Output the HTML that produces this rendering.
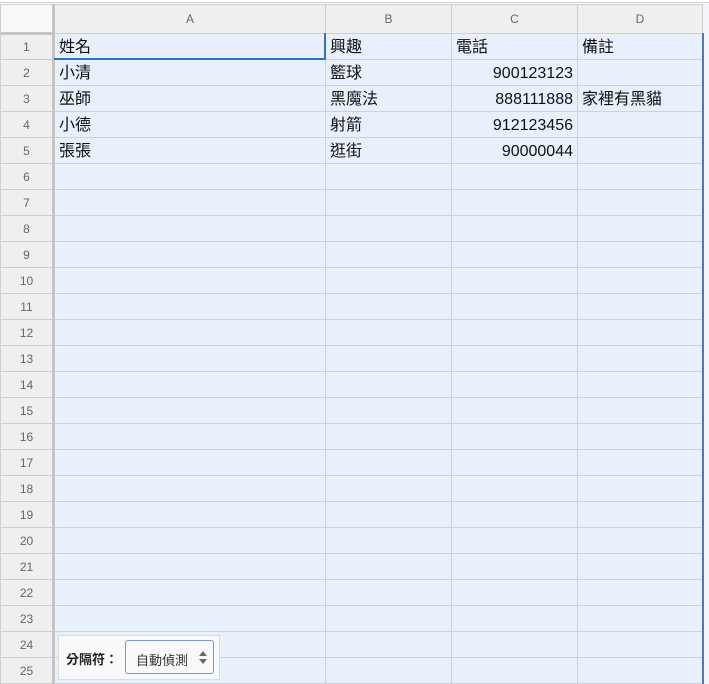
<!DOCTYPE html>
<html><head><meta charset="utf-8"><style>
body{margin:0;width:709px;height:684px;overflow:hidden;background:#fff;font-family:"Liberation Sans","Noto Sans CJK TC",sans-serif;position:relative}
.topline{position:absolute;left:0;top:2px;width:709px;height:1px;background:#d0d0d0}
table{position:absolute;left:0;top:4px;border-collapse:collapse;table-layout:fixed}
td{border:1px solid #c9d2df;height:25px;padding:0 4px;font-size:16px;color:#111;background:#e8f0fc;white-space:nowrap;overflow:hidden;line-height:18px;box-sizing:border-box}
tr td{height:26px}
tr:not(.h) td:not(.rh){padding-top:3px}
tr.h td{background:#efefef;border-color:#cfcfcf;color:#666;font-size:12px;text-align:center;height:29px}
td.rh{background:#efefef;border-color:#cfcfcf;color:#666;font-size:12px;text-align:center;border-right:3px solid #c4c4c4}
tr.h td.c0{background:#f8f9fa;border-right:3px solid #c4c4c4;border-bottom:3px solid #c4c4c4}
td.n{text-align:right}
.ext{position:absolute;left:703px;top:4px;width:6px;height:680px;background:#f2f4f7}
.blue{position:absolute;left:702px;top:33px;width:2px;height:651px;background:#4a78c2}
.act{position:absolute;left:54px;top:58px;width:272px;height:2px;background:#2f73c9}
.act2{position:absolute;left:324px;top:33px;width:2px;height:27px;background:#2f73c9}
.pop{position:absolute;left:58px;top:635px;width:162px;height:45px;background:#f8f9fa;border:1px solid #dcdcdc;box-sizing:border-box}
.lab{position:absolute;left:7px;top:13px;font-size:13px;font-weight:bold;color:#222}
.sel{position:absolute;left:66px;top:4px;width:89px;height:34px;border:1px solid #7a9cc9;border-radius:3px;background:#f8f9fa;box-sizing:border-box;font-size:13px;color:#333}
.sel span{position:absolute;left:10px;top:9px}
.ar{position:absolute;left:73px;top:10px;width:0;height:0;border-left:4px solid transparent;border-right:4px solid transparent;border-bottom:5px solid #666}
.ar2{position:absolute;left:73px;top:18px;width:0;height:0;border-left:4px solid transparent;border-right:4px solid transparent;border-top:5px solid #666}
</style></head><body>
<div class="topline"></div>
<div class="ext"></div>
<table>
<colgroup><col style="width:53px"><col style="width:272px"><col style="width:126px"><col style="width:126px"><col style="width:125px"></colgroup>
<tr class="h"><td class="c0"></td><td>A</td><td>B</td><td>C</td><td>D</td></tr>
<tr><td class="rh">1</td><td>姓名</td><td>興趣</td><td>電話</td><td>備註</td></tr>
<tr><td class="rh">2</td><td>小清</td><td>籃球</td><td class="n">900123123</td><td></td></tr>
<tr><td class="rh">3</td><td>巫師</td><td>黑魔法</td><td class="n">888111888</td><td>家裡有黑貓</td></tr>
<tr><td class="rh">4</td><td>小德</td><td>射箭</td><td class="n">912123456</td><td></td></tr>
<tr><td class="rh">5</td><td>張張</td><td>逛街</td><td class="n">90000044</td><td></td></tr>
<tr><td class="rh">6</td><td></td><td></td><td></td><td></td></tr>
<tr><td class="rh">7</td><td></td><td></td><td></td><td></td></tr>
<tr><td class="rh">8</td><td></td><td></td><td></td><td></td></tr>
<tr><td class="rh">9</td><td></td><td></td><td></td><td></td></tr>
<tr><td class="rh">10</td><td></td><td></td><td></td><td></td></tr>
<tr><td class="rh">11</td><td></td><td></td><td></td><td></td></tr>
<tr><td class="rh">12</td><td></td><td></td><td></td><td></td></tr>
<tr><td class="rh">13</td><td></td><td></td><td></td><td></td></tr>
<tr><td class="rh">14</td><td></td><td></td><td></td><td></td></tr>
<tr><td class="rh">15</td><td></td><td></td><td></td><td></td></tr>
<tr><td class="rh">16</td><td></td><td></td><td></td><td></td></tr>
<tr><td class="rh">17</td><td></td><td></td><td></td><td></td></tr>
<tr><td class="rh">18</td><td></td><td></td><td></td><td></td></tr>
<tr><td class="rh">19</td><td></td><td></td><td></td><td></td></tr>
<tr><td class="rh">20</td><td></td><td></td><td></td><td></td></tr>
<tr><td class="rh">21</td><td></td><td></td><td></td><td></td></tr>
<tr><td class="rh">22</td><td></td><td></td><td></td><td></td></tr>
<tr><td class="rh">23</td><td></td><td></td><td></td><td></td></tr>
<tr><td class="rh">24</td><td></td><td></td><td></td><td></td></tr>
<tr><td class="rh">25</td><td></td><td></td><td></td><td></td></tr>
</table>
<div class="blue"></div>
<div class="act"></div>
<div class="act2"></div>
<div class="pop"><div class="lab">分隔符：</div><div class="sel"><span>自動偵測</span><div class="ar"></div><div class="ar2"></div></div></div>
</body></html>
